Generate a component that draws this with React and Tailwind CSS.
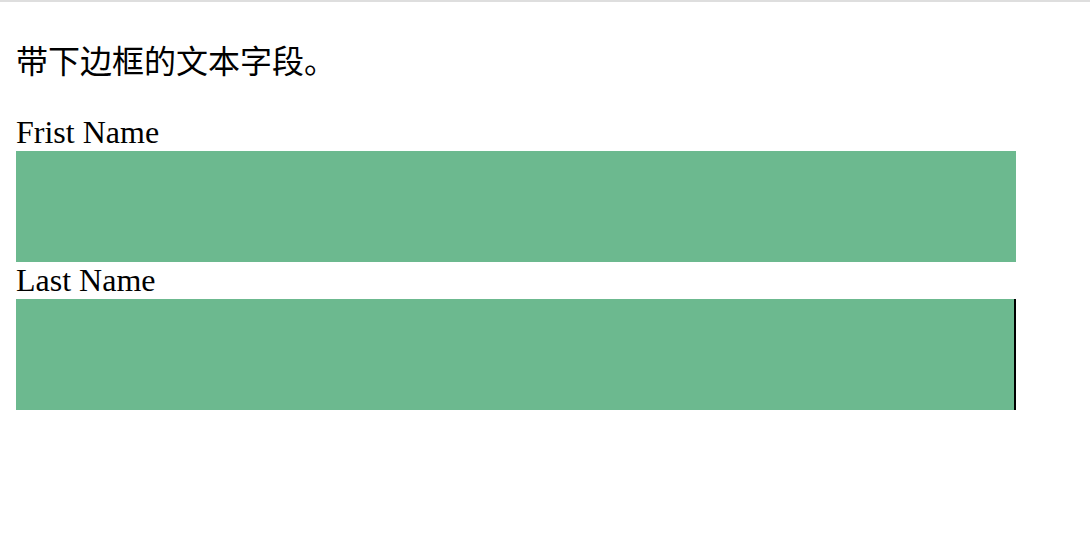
export default function App() {
  return (
    <div className="min-h-screen bg-white">
      <div className="h-[2px] bg-[#dedede]" />
      <div className="px-4 pt-[35px]">
        <p className="text-[32px] leading-[44px] text-black" style={{ fontFamily: '"Noto Sans CJK SC", "Noto Sans", sans-serif' }}>
          带下边框的文本字段。
        </p>
        <form className="mt-[33px] w-[1000px]" style={{ fontFamily: '"Liberation Serif", serif' }}>
          <label className="block text-[32px] leading-[37px] text-black">Frist Name</label>
          <input type="text" className="block w-[1000px] h-[111px] bg-[#6cb98f] outline-none border-0" />
          <label className="block text-[32px] leading-[37px] text-black">Last Name</label>
          <input type="text" className="block w-[1000px] h-[111px] bg-[#6cb98f] outline-none border-0 border-r-2 border-black" />
        </form>
      </div>
    </div>
  )
}
